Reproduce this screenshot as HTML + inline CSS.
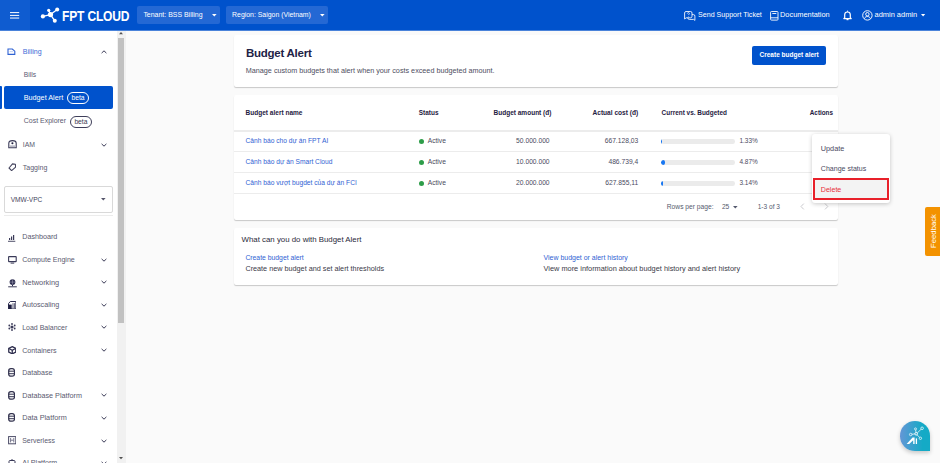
<!DOCTYPE html>
<html><head><meta charset="utf-8">
<style>
*{box-sizing:border-box;margin:0;padding:0}
html,body{width:940px;height:463px;overflow:hidden}
body{position:relative;background:#fafafa;font-family:"Liberation Sans",sans-serif;color:#333}
.a{position:absolute;white-space:nowrap}
#hdr{position:absolute;left:0;top:0;width:940px;height:30px;background:#0052cc}
#ham{position:absolute;left:0;top:0;width:29.5px;height:30px;background:#0f5cd0}
.dd{position:absolute;top:6.3px;height:17.6px;background:#2468d4;border-radius:2px}
.ht{color:#fff;font-size:7.1px;line-height:10px}
#side{position:absolute;left:0;top:31px;width:117.3px;height:432px;background:#fff}
.si{font-size:7.05px;line-height:10px;color:#5a5a70;margin-top:.5px}
.chev{position:absolute;width:6px;height:6px}
.card{position:absolute;left:233.6px;width:604.6px;background:#fff;border-radius:2px;box-shadow:0 1px 1px rgba(0,0,0,.2)}
.th{font-size:6.5px;font-weight:bold;color:#1f2142;line-height:10px;margin-top:.5px}
.td{font-size:6.7px;color:#4a4a5e;line-height:10px}
.lk{font-size:6.67px;color:#2f62d3;line-height:10px}
.hr{position:absolute;left:233.6px;width:604.6px;height:1px;background:#ececec}
.bar{position:absolute;left:660.9px;width:74.1px;height:4.5px;border-radius:2.3px;background:#ebebeb;overflow:hidden}
.bar i{position:absolute;left:0;top:0;height:4.5px;background:#1877f2;border-radius:2.3px}
.dot{position:absolute;left:418.5px;width:5.4px;height:5.4px;border-radius:50%;background:#2e9d49}
</style></head><body>

<!-- HEADER -->
<div id="hdr"></div>
<div id="ham"></div>
<div class="a" style="left:0;top:30px;width:940px;height:1px;background:#4a83da"></div>
<svg class="a" style="left:10px;top:12px" width="10" height="7" viewBox="0 0 10 7"><g fill="#fff" opacity=".9"><rect x="0" y="0" width="9.2" height="1.1"/><rect x="0" y="2.9" width="9.2" height="1.1"/><rect x="0" y="5.5" width="9.2" height="1.1"/></g></svg>
<!-- logo -->
<svg class="a" style="left:38px;top:6px" width="24" height="18" viewBox="38 6 24 18">
 <g stroke="#fff" stroke-width="1.3" fill="none"><line x1="42.9" y1="16.4" x2="50.5" y2="14.6"/><line x1="48.7" y1="10.3" x2="50.5" y2="14.6"/><line x1="57.2" y1="9.4" x2="50.5" y2="14.6"/><line x1="54.8" y1="20.8" x2="50.5" y2="14.6"/></g>
 <g fill="#fff"><circle cx="42.9" cy="16.4" r="2.1"/><circle cx="50.5" cy="14.6" r="2.6"/><circle cx="48.7" cy="10.3" r="1.6"/><circle cx="57.2" cy="9.4" r="2"/><circle cx="54.8" cy="20.8" r="2"/></g>
</svg>
<div class="a" style="left:61.8px;top:6.5px;font-size:14.5px;line-height:18px;font-weight:bold;color:#fff;letter-spacing:-0.2px;transform:scaleX(.83);transform-origin:0 0">FPT CLOUD</div>

<div class="dd" style="left:137.4px;width:82.4px"></div>
<div class="a ht" style="left:143.4px;top:9.8px;font-size:6.96px">Tenant: BSS Billing</div>
<svg class="a" style="left:211.5px;top:13.8px" width="5" height="3"><path d="M0 0H4.6L2.3 2.6Z" fill="#fff"/></svg>
<div class="dd" style="left:226px;width:102.4px"></div>
<div class="a ht" style="left:232.1px;top:9.8px;font-size:6.9px">Region: Saigon (Vietnam)</div>
<svg class="a" style="left:320.3px;top:13.8px" width="5" height="3"><path d="M0 0H4.6L2.3 2.6Z" fill="#fff"/></svg>

<!-- right header -->
<svg class="a" style="left:684.3px;top:10.6px" width="11.5" height="10" viewBox="0 0 11.5 10" fill="none" stroke="#fff" stroke-width="0.85"><path d="M8 3.6h1.4a1.5 1.5 0 0 1 1.5 1.5v4.3l-1.2-1H5.3a1.5 1.5 0 0 1-1.5-1.5V7"/><path d="M2 .5h4.5a1.5 1.5 0 0 1 1.5 1.5v3.3a1.5 1.5 0 0 1-1.5 1.5H2.2L.6 8V2A1.5 1.5 0 0 1 2 .5z"/><path d="M3.3 2.6c.1-.7.6-1 1.1-1 .6 0 1 .4 1 .9 0 .7-.9.8-.9 1.5" stroke-width=".75"/><circle cx="4.5" cy="5.3" r=".35" fill="#fff" stroke="none"/></svg>
<div class="a ht" style="left:698.1px;top:10.1px;font-size:7.08px">Send Support Ticket</div>
<svg class="a" style="left:770px;top:10.7px" width="9" height="10" viewBox="0 0 9 10" fill="none" stroke="#fff" stroke-width="0.9"><rect x="0.6" y="0.5" width="7.4" height="8.6" rx="0.8"/><line x1="0.6" y1="6.8" x2="8" y2="6.8"/><line x1="2.3" y1="2.5" x2="6.3" y2="2.5"/></svg>
<div class="a ht" style="left:780px;top:10.1px;font-size:7.4px">Documentation</div>
<svg class="a" style="left:842.6px;top:10.4px" width="9" height="10.5" viewBox="0 0 9 10.5" fill="none" stroke="#fff" stroke-width="1.2"><path d="M1.7 7.7V4.8a2.8 2.8 0 0 1 5.6 0v2.9l.9.9H.8z" stroke-linejoin="round"/><path d="M3.5 9.6h2" stroke-width="1.2"/><circle cx="4.5" cy="1.2" r=".6" fill="#fff" stroke="none"/></svg>
<svg class="a" style="left:862.3px;top:9.8px" width="11" height="11" viewBox="0 0 11 11" fill="none" stroke="#fff" stroke-width="0.95"><circle cx="5.4" cy="5.4" r="4.7"/><circle cx="5.4" cy="4.2" r="1.7"/><path d="M2.4 8.6c.6-1.5 1.7-2.1 3-2.1s2.4.6 3 2.1"/></svg>
<div class="a ht" style="left:874.5px;top:10.1px;font-size:7.46px">admin admin</div>
<svg class="a" style="left:920.8px;top:13.8px" width="5" height="3"><path d="M0 0H4.2L2.1 2.5Z" fill="#fff"/></svg>

<!-- SIDEBAR -->
<div id="side"></div>
<!-- scrollbar -->
<div class="a" style="left:117.3px;top:31px;width:8.6px;height:432px;background:#f1f1f1"></div>
<div class="a" style="left:118.1px;top:37.7px;width:6.4px;height:285.4px;background:#c1c1c1"></div>
<svg class="a" style="left:119px;top:32.3px" width="4" height="3"><path d="M0 2.3L2 0L4 2.3Z" fill="#505050"/></svg>
<svg class="a" style="left:119px;top:457px" width="4" height="3"><path d="M0 0L2 2.3L4 0Z" fill="#505050"/></svg>

<!-- Billing -->
<svg class="a" style="left:7.3px;top:47.5px" width="9" height="7.5" viewBox="0 0 9 7.5" fill="none" stroke="#2f62d3"><path d="M1 1H5.3L7.8 3.2V6.4H1Z" stroke-width="1.1"/><path d="M2.6 3.6H6.2" stroke-width=".6" stroke="#9db4ec"/></svg>
<div class="a si" style="left:22.8px;top:46.6px;color:#3d6ad6">Billing</div>
<svg class="a chev" style="left:100.8px;top:49px" viewBox="0 0 6 6"><path d="M.6 4.1L3 1.8L5.4 4.1" fill="none" stroke="#3a3a56" stroke-width="1"/></svg>
<div class="a si" style="left:23.7px;top:69.3px;font-size:6.71px">Bills</div>
<div class="a" style="left:0;top:86px;width:1.7px;height:23.4px;background:#0052cc;border-radius:0 1px 1px 0"></div>
<div class="a" style="left:4.3px;top:86px;width:108.5px;height:23.4px;background:#0052cc;border-radius:2px"></div>
<div class="a si" style="left:23.7px;top:92.5px;color:#fff;font-size:7.25px">Budget Alert</div>
<div class="a" style="left:67.1px;top:92.1px;width:22px;height:11.7px;border:1px solid #fff;border-radius:6px"></div>
<div class="a" style="left:67.1px;top:93px;width:22px;text-align:center;font-size:6.7px;line-height:10px;color:#fff">beta</div>
<div class="a si" style="left:23.7px;top:115.7px;font-size:7px">Cost Explorer</div>
<div class="a" style="left:70px;top:115.8px;width:21.8px;height:12.1px;border:1px solid #3f3f5a;border-radius:6px"></div>
<div class="a" style="left:70px;top:116.9px;width:21.8px;text-align:center;font-size:6.7px;line-height:10px;color:#3a3a50">beta</div>

<!-- IAM -->
<svg class="a" style="left:7.6px;top:140px" width="9" height="8.5" viewBox="0 0 9 8.5"><path d="M.8 7.7V3.3C.8 1.6 2 .6 4.5 .6S8.2 1.6 8.2 3.3V7.7Z" fill="none" stroke="#3a3a58" stroke-width="1.1"/><circle cx="4.4" cy="3.2" r="1.05" fill="#1e1e40"/><rect x="2" y="5.6" width="5" height="1" fill="#8a8aa0"/></svg>
<div class="a si" style="left:22.8px;top:139.6px;font-size:6.86px">IAM</div>
<svg class="a chev" style="left:100.6px;top:141.6px" viewBox="0 0 6 6"><path d="M.6 1.9L3 4.2L5.4 1.9" fill="none" stroke="#3a3a56" stroke-width="1"/></svg>
<svg class="a" style="left:7.5px;top:162.8px" width="8.5" height="8.5" viewBox="0 0 8.5 8.5"><path d="M4.5 .9L7.4 1.2 7.6 4.1 3.6 7.6 1 5Z" fill="none" stroke="#44445e" stroke-width="1.1" stroke-linejoin="round"/></svg>
<div class="a si" style="left:22.8px;top:162.3px;font-size:6.99px">Tagging</div>

<!-- VPC select -->
<div class="a" style="left:4.3px;top:186.4px;width:108.5px;height:26.3px;border:1px solid #d9d9d9;border-radius:2px"></div>
<div class="a si" style="left:10.7px;top:194.4px;font-size:6.58px;color:#3f3f5a">VMW-VPC</div>
<svg class="a" style="left:101.4px;top:198.2px" width="5" height="3"><path d="M0 0H4.6L2.3 2.5Z" fill="#55556a"/></svg>
<div class="a" style="left:4.3px;top:215.3px;width:108.5px;height:1px;background:#ececec"></div>

<!-- service list -->
<svg class="a" style="left:8px;top:233.5px" width="8" height="8" viewBox="0 0 8 8" fill="#3a3a58"><rect x="1" y="4" width="1.2" height="2" /><rect x="3" y="2.5" width="1.2" height="3.5"/><rect x="5" y="1" width="1.2" height="5"/><rect x="0" y="6.8" width="7.3" height="0.9"/></svg>
<div class="a si" style="left:22.2px;top:231.8px;font-size:7.2px">Dashboard</div>
<svg class="a" style="left:7.7px;top:255.5px" width="9" height="8" viewBox="0 0 9 8"><rect x=".6" y=".6" width="7.6" height="5" rx=".4" fill="none" stroke="#3a3a58" stroke-width="1.1"/><rect x="2.6" y="6.6" width="3.6" height="1" fill="#3a3a58"/></svg>
<div class="a si" style="left:22.2px;top:254.6px;font-size:7.07px">Compute Engine</div>
<svg class="a chev" style="left:100.6px;top:256.8px" viewBox="0 0 6 6"><path d="M.6 1.9L3 4.2L5.4 1.9" fill="none" stroke="#3a3a56" stroke-width="1"/></svg>
<svg class="a" style="left:7.5px;top:278.5px" width="9" height="9" viewBox="0 0 9 9"><circle cx="4.5" cy="3.1" r="2.9" fill="#2e2e50"/><path d="M4.5 .5v5.2M1.8 3.1h5.4" stroke="#9a9ab0" stroke-width=".6"/><rect x="4" y="5.8" width="1" height="1.4" fill="#2e2e50"/><rect x=".2" y="7.3" width="8.6" height="1" fill="#3a3a58"/></svg>
<div class="a si" style="left:22.2px;top:277.2px;font-size:7.4px">Networking</div>
<svg class="a chev" style="left:100.6px;top:279.4px" viewBox="0 0 6 6"><path d="M.6 1.9L3 4.2L5.4 1.9" fill="none" stroke="#3a3a56" stroke-width="1"/></svg>
<svg class="a" style="left:7.8px;top:300.6px" width="8.5" height="8.5" viewBox="0 0 8.5 8.5"><path d="M2.3 .5H7.9V8H.5V2.6Z" fill="none" stroke="#2e2e50" stroke-width="1"/><rect x=".5" y="3.6" width="3.2" height="4.4" fill="#1e1e40"/><rect x="4.6" y="2.2" width=".8" height="5.4" fill="#2e2e50"/><rect x="6.3" y="2.2" width=".8" height="5.4" fill="#2e2e50"/></svg>
<div class="a si" style="left:22.2px;top:299.7px;font-size:7.2px">Autoscaling</div>
<svg class="a chev" style="left:100.6px;top:301.9px" viewBox="0 0 6 6"><path d="M.6 1.9L3 4.2L5.4 1.9" fill="none" stroke="#3a3a56" stroke-width="1"/></svg>
<svg class="a" style="left:8px;top:323px" width="8" height="8" viewBox="0 0 8 8" fill="#3a3a58"><circle cx="4" cy="4" r="1.6"/><circle cx="4" cy="1" r=".9"/><circle cx="4" cy="7" r=".9"/><circle cx="1.3" cy="2.5" r=".9"/><circle cx="6.7" cy="2.5" r=".9"/><circle cx="1.3" cy="5.5" r=".9"/><circle cx="6.7" cy="5.5" r=".9"/></svg>
<div class="a si" style="left:22.2px;top:322px;font-size:7.0px">Load Balancer</div>
<svg class="a chev" style="left:100.6px;top:324.2px" viewBox="0 0 6 6"><path d="M.6 1.9L3 4.2L5.4 1.9" fill="none" stroke="#3a3a56" stroke-width="1"/></svg>
<svg class="a" style="left:7.8px;top:345.8px" width="8.5" height="8.5" viewBox="0 0 8 8" fill="none" stroke="#2e2e4e" stroke-width="1.2"><path d="M4 .6L7.3 2.3V5.7L4 7.4L.7 5.7V2.3z"/><path d="M.9 2.4L4 4L7.1 2.4M4 4V7.3"/></svg>
<div class="a si" style="left:22.2px;top:345.2px;font-size:7.13px">Containers</div>
<svg class="a chev" style="left:100.6px;top:347.4px" viewBox="0 0 6 6"><path d="M.6 1.9L3 4.2L5.4 1.9" fill="none" stroke="#3a3a56" stroke-width="1"/></svg>
<svg class="a" style="left:8.2px;top:368px" width="7.2" height="9" viewBox="0 0 7.2 9" fill="none" stroke="#33334f" stroke-width="1.25"><rect x=".7" y=".7" width="5.8" height="7.5" rx="2.2"/><path d="M.7 3.2h5.8M.7 5.7h5.8" stroke-width="1"/></svg>
<div class="a si" style="left:22.2px;top:367.3px;font-size:7.05px">Database</div>
<svg class="a" style="left:8.2px;top:390.7px" width="7.2" height="9" viewBox="0 0 7.2 9" fill="none" stroke="#33334f" stroke-width="1.25"><rect x=".7" y=".7" width="5.8" height="7.5" rx="2.2"/><path d="M.7 3.2h5.8M.7 5.7h5.8" stroke-width="1"/></svg>
<div class="a si" style="left:22.2px;top:390px;font-size:7.22px">Database Platform</div>
<svg class="a chev" style="left:100.6px;top:392.2px" viewBox="0 0 6 6"><path d="M.6 1.9L3 4.2L5.4 1.9" fill="none" stroke="#3a3a56" stroke-width="1"/></svg>
<svg class="a" style="left:8.2px;top:413.4px" width="7.2" height="9" viewBox="0 0 7.2 9" fill="none" stroke="#33334f" stroke-width="1.25"><rect x=".7" y=".7" width="5.8" height="7.5" rx="2.2"/><path d="M.7 3.2h5.8M.7 5.7h5.8" stroke-width="1"/></svg>
<div class="a si" style="left:22.2px;top:412.7px;font-size:7.3px">Data Platform</div>
<svg class="a chev" style="left:100.6px;top:414.9px" viewBox="0 0 6 6"><path d="M.6 1.9L3 4.2L5.4 1.9" fill="none" stroke="#3a3a56" stroke-width="1"/></svg>
<svg class="a" style="left:7.8px;top:436px" width="8.5" height="8.5" viewBox="0 0 8.5 8.5" fill="none" stroke="#4a4a66" stroke-width="1"><rect x=".6" y=".6" width="7.2" height="7.2"/><path d="M2.6 2v4.4M2.6 4.2h3.2M5.8 2v4.4" stroke="#7a7a90"/></svg>
<div class="a si" style="left:22.2px;top:435.4px;font-size:6.95px">Serverless</div>
<svg class="a chev" style="left:100.6px;top:437.6px" viewBox="0 0 6 6"><path d="M.6 1.9L3 4.2L5.4 1.9" fill="none" stroke="#3a3a56" stroke-width="1"/></svg>
<svg class="a" style="left:8px;top:458.5px" width="8" height="8" viewBox="0 0 8 8" fill="none" stroke="#3a3a58" stroke-width="1"><rect x="1" y="1.5" width="6" height="5" rx="1"/><path d="M4 0v1.5"/></svg>
<div class="a si" style="left:22.2px;top:457.6px;font-size:7.1px">AI Platform</div>
<svg class="a chev" style="left:100.6px;top:459.8px" viewBox="0 0 6 6"><path d="M.6 1.9L3 4.2L5.4 1.9" fill="none" stroke="#3a3a56" stroke-width="1"/></svg>

<!-- CARD 1 -->
<div class="card" style="top:35px;height:52px"></div>
<div class="a" style="left:245.9px;top:45.5px;font-size:11.5px;line-height:14px;font-weight:bold;color:#1e2246;letter-spacing:-0.25px">Budget Alert</div>
<div class="a" style="left:245.8px;top:65.7px;font-size:7.22px;line-height:10px;color:#4d4d5e">Manage custom budgets that alert when your costs exceed budgeted amount.</div>
<div class="a" style="left:751.9px;top:46.4px;width:74.5px;height:18.3px;background:#0052cc;border-radius:2px"></div>
<div class="a" style="left:751.9px;top:50.3px;width:74.5px;text-align:center;font-size:6.5px;line-height:10px;font-weight:bold;color:#fff">Create budget alert</div>

<!-- CARD 2 -->
<div class="card" style="top:95px;height:125px"></div>
<div class="a th" style="left:245.6px;top:107.3px;font-size:6.53px">Budget alert name</div>
<div class="a th" style="left:418.8px;top:107.3px;font-size:6.45px">Status</div>
<div class="a th" style="left:493.5px;top:107.3px;font-size:6.53px">Budget amount (đ)</div>
<div class="a th" style="left:592.5px;top:107.3px;font-size:6.58px">Actual cost (đ)</div>
<div class="a th" style="left:661.6px;top:107.3px;font-size:6.43px">Current vs. Budgeted</div>
<div class="a th" style="left:809.8px;top:107.3px;font-size:6.33px">Actions</div>
<div class="hr" style="top:130px;height:2px;background:#ececec"></div>

<div class="a lk" style="left:245.5px;top:136px">Cảnh báo cho dự án FPT AI</div>
<div class="dot" style="top:138.7px"></div>
<div class="a td" style="left:427.7px;top:136px">Active</div>
<div class="a td" style="left:515.5px;top:136px;width:34.1px;text-align:right">50.000.000</div>
<div class="a td" style="left:600px;top:136px;width:38.2px;text-align:right">667.128,03</div>
<div class="bar" style="top:139.1px"><i style="width:1.3px"></i></div>
<div class="a td" style="left:739.5px;top:136px;font-size:6.45px">1.33%</div>
<div class="hr" style="top:151px"></div>

<div class="a lk" style="left:245.5px;top:157.2px">Cảnh báo dự án Smart Cloud</div>
<div class="dot" style="top:159.8px"></div>
<div class="a td" style="left:427.7px;top:157.2px">Active</div>
<div class="a td" style="left:515.5px;top:157.2px;width:34.1px;text-align:right">10.000.000</div>
<div class="a td" style="left:600px;top:157.2px;width:38.2px;text-align:right">486.739,4</div>
<div class="bar" style="top:160.2px"><i style="width:3.8px"></i></div>
<div class="a td" style="left:739.5px;top:157.2px;font-size:6.45px">4.87%</div>
<div class="hr" style="top:172.3px"></div>

<div class="a lk" style="left:245.5px;top:178.3px">Cảnh báo vượt bugdet của dự án FCI</div>
<div class="dot" style="top:180.6px"></div>
<div class="a td" style="left:427.7px;top:178.3px">Active</div>
<div class="a td" style="left:515.5px;top:178.3px;width:34.1px;text-align:right">20.000.000</div>
<div class="a td" style="left:600px;top:178.3px;width:38.2px;text-align:right">627.855,11</div>
<div class="bar" style="top:181.3px"><i style="width:2.6px"></i></div>
<div class="a td" style="left:739.5px;top:178.3px;font-size:6.45px">3.14%</div>
<div class="hr" style="top:193.2px"></div>

<div class="a td" style="left:666.8px;top:201.8px;font-size:6.68px;color:#555a6e">Rows per page:</div>
<div class="a td" style="left:721.9px;top:201.8px;font-size:6.68px;color:#555a6e">25</div>
<svg class="a" style="left:733.3px;top:206px" width="5" height="3"><path d="M0 0H4.6L2.3 2.4Z" fill="#555a6e"/></svg>
<div class="a td" style="left:757.7px;top:201.8px;font-size:6.57px;color:#555a6e">1-3 of 3</div>
<svg class="a" style="left:799.8px;top:203px" width="5" height="7" viewBox="0 0 5 7"><path d="M3.8 .6L1 3.5l2.8 2.9" fill="none" stroke="#c4c4c8" stroke-width=".9"/></svg>
<svg class="a" style="left:823.5px;top:203px" width="5" height="7" viewBox="0 0 5 7"><path d="M1 .6L3.8 3.5 1 6.4" fill="none" stroke="#c4c4c8" stroke-width=".9"/></svg>

<!-- CARD 3 -->
<div class="card" style="top:228px;height:57px"></div>
<div class="a" style="left:241.6px;top:234.8px;font-size:7.85px;line-height:10px;color:#2a2a3a">What can you do with Budget Alert</div>
<div class="a" style="left:245.4px;top:252.5px;font-size:6.82px;line-height:10px;color:#2f62d3">Create budget alert</div>
<div class="a" style="left:245.4px;top:263.8px;font-size:7.25px;line-height:10px;color:#3a3a48">Create new budget and set alert thresholds</div>
<div class="a" style="left:543.5px;top:252.5px;font-size:6.97px;line-height:10px;color:#2f62d3">View budget or alert history</div>
<div class="a" style="left:543.5px;top:263.8px;font-size:7.39px;line-height:10px;color:#3a3a48">View more information about budget history and alert history</div>

<!-- MENU -->
<div class="a" style="left:812.4px;top:134px;width:77.6px;height:69px;background:#fff;border-radius:3px;box-shadow:0 1px 4px rgba(0,0,0,.22)"></div>
<div class="a" style="left:813px;top:178px;width:76px;height:22px;background:#f3f3f3"></div>
<div class="a" style="left:813px;top:177.9px;width:76.1px;height:22.2px;border:2px solid #e8202a"></div>
<div class="a" style="left:820.8px;top:143.7px;font-size:7.3px;line-height:10px;color:#4a4a62">Update</div>
<div class="a" style="left:820.8px;top:163.7px;font-size:7.05px;line-height:10px;color:#4a4a62">Change status</div>
<div class="a" style="left:820.8px;top:184.5px;font-size:7.1px;line-height:10px;color:#e8303a">Delete</div>

<!-- FEEDBACK -->
<div class="a" style="left:924.9px;top:206.8px;width:16px;height:49.3px;background:#f39200;border-radius:2px 0 0 2px"></div>
<div class="a" style="left:908.5px;top:226px;width:49px;height:10px;text-align:center;font-size:7.7px;line-height:10px;color:#fff;transform:rotate(-90deg)">Feedback</div>

<!-- AI bubble -->
<div class="a" style="left:899.8px;top:420.9px;width:30.5px;height:30px;border-radius:50% 50% 0 50%;background:linear-gradient(90deg,#6496d6,#14aac6 75%);box-shadow:0 2px 4px rgba(0,0,0,.2)"></div>
<svg class="a" style="left:900px;top:420px" width="32" height="32" viewBox="900 420 32 32" fill="none" stroke="#fff" stroke-width=".7"><path d="M911.8 434.3l3.2-.4M915.7 430l.3 2.6M917.2 433l4-3.8M916.9 434.7l2.7 2.7"/><circle cx="916.2" cy="433.8" r="1.3" stroke-width=".9"/><circle cx="910.7" cy="434.5" r="1.25"/><circle cx="915.5" cy="428.9" r="1"/><circle cx="922.1" cy="428.3" r="1.3"/><circle cx="920.4" cy="438.3" r="1.2"/><path d="M906.6 444L912.6 437.6H914.6V444H913.2V440.2L909.2 444Z" fill="#fff" stroke="none"/><path d="M916.4 438.4v5.6" stroke-width="1.3"/></svg>

</body></html>
